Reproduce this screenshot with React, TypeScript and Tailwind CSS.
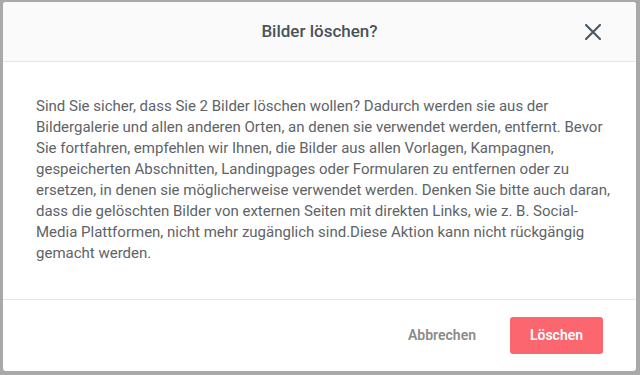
import React from 'react';

const App: React.FC = () => {
  return (
    <div
      className="w-[640px] h-[375px] bg-[#a9a9a9] pt-[2px] pl-[3px] pr-[4px] pb-[4px] flex"
      style={{ fontFamily: 'Roboto, "Liberation Sans", sans-serif' }}
    >
      <div className="flex-1 flex flex-col bg-white rounded-[3px] overflow-hidden">
        {/* Header */}
        <div className="relative h-[60px] shrink-0 bg-[#fafafa] border-b border-[#e6e6e6] flex items-center justify-center">
          <h2 className="text-[17px] font-medium text-[#4b5158]">Bilder löschen?</h2>
          <button type="button" className="absolute right-[33px] top-[20px] text-[#4b5a62]" aria-label="Schließen">
            <svg width="20" height="20" viewBox="0 0 20 20" fill="none" stroke="currentColor" strokeWidth="2.2" strokeLinecap="round">
              <path d="M3 3l14 14M17 3L3 17" />
            </svg>
          </button>
        </div>

        {/* Body */}
        <div className="flex-1 pl-[33px] pr-[10px] pt-[34px]">
          <p className="text-[15px] leading-[21px] text-[#606367] w-[580px]">
            Sind Sie sicher, dass Sie 2 Bilder löschen wollen? Dadurch werden sie aus der Bildergalerie und allen
            anderen Orten, an denen sie verwendet werden, entfernt. Bevor Sie fortfahren, empfehlen wir Ihnen, die
            Bilder aus allen Vorlagen, Kampagnen, gespeicherten Abschnitten, Landingpages oder Formularen zu
            entfernen oder zu ersetzen, in denen sie möglicherweise verwendet werden. Denken Sie bitte auch daran,
            dass die gelöschten Bilder von externen Seiten mit direkten Links, wie z. B. Social-Media Plattformen,
            nicht mehr zugänglich sind.Diese Aktion kann nicht rückgängig gemacht werden.
          </p>
        </div>

        {/* Footer */}
        <div className="h-[72px] shrink-0 border-t border-[#e6e6e6] flex items-center justify-end gap-[34px] pr-[33px]">
          <button type="button" className="text-[14px] font-semibold text-[#8b8b8b]">
            Abbrechen
          </button>
          <button
            type="button"
            className="h-[37px] w-[93px] rounded-[3px] bg-[#fb666f] text-white text-[14px] font-semibold"
          >
            Löschen
          </button>
        </div>
      </div>
    </div>
  );
};

export default App;
